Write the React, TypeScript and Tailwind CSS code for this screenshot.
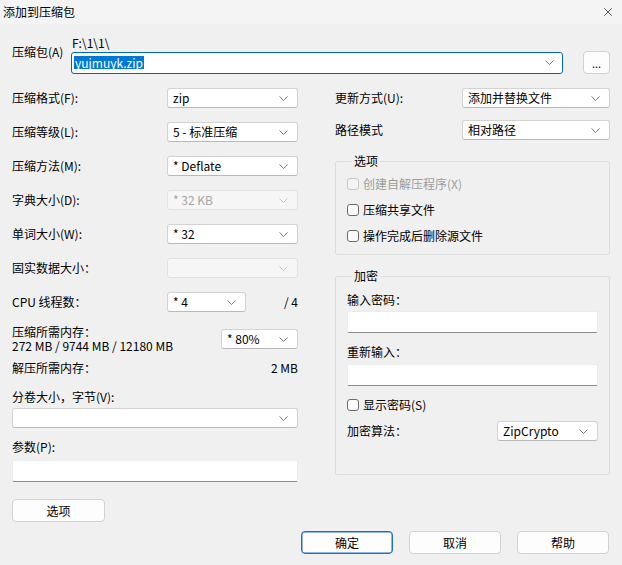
import type { ReactNode } from "react";
import { X } from "lucide-react";
import clsx from "clsx";

const Chevron = ({ light }: { light?: boolean }) => (
  <svg width="9" height="5" viewBox="0 0 9 5" className="shrink-0">
    <path d="M0.5 0.5 L4.5 4.5 L8.5 0.5" fill="none" stroke={light ? "#c4c4c4" : "#7a7a7a"} strokeWidth="1" />
  </svg>
);

const Combo = ({ value, className, disabled }: { value?: string; className: string; disabled?: boolean }) => (
  <div
    className={clsx(
      "flex h-[20px] shrink-0 items-center justify-between rounded-[3px] border pl-[5px] pr-[9px] leading-[16px]",
      disabled
        ? "border-[#e2e2e2] bg-[#f6f6f6] text-[#a6a6a6]"
        : "border-[#d3d3d3] border-b-[#b9b9b9] bg-white text-black",
      className
    )}
  >
    <span className="whitespace-nowrap">{value}</span>
    <Chevron light={disabled} />
  </div>
);

const Field = () => (
  <div className="h-[22px] w-full rounded-[2px] border border-[#ececec] border-b-[#8d8d8d] bg-white" />
);

const Button = ({ children, primary, className }: { children: ReactNode; primary?: boolean; className?: string }) => (
  <button
    className={clsx(
      "flex h-[23px] items-center justify-center rounded-[4px] border bg-[#fdfdfd]",
      primary ? "border-[#1f6fc0] shadow-[inset_0_0_0_0.5px_#1f6fc0]" : "border-[#d2d2d2]",
      className
    )}
  >
    {children}
  </button>
);

const Check = ({ label, disabled }: { label: string; disabled?: boolean }) => (
  <div className={clsx("flex h-[16px] items-center gap-[4px]", disabled ? "text-[#9d9d9d]" : "text-black")}>
    <span
      className={clsx(
        "h-[12px] w-[12px] shrink-0 rounded-[3px] border",
        disabled ? "border-[#c8c8c8] bg-[#f4f4f4]" : "border-[#6c6c6c] bg-[#fbfbfb]"
      )}
    />
    <span>{label}</span>
  </div>
);

const Row = ({ label, children }: { label: string; children: ReactNode }) => (
  <div className="flex h-[20px] items-center justify-between">
    <span>{label}</span>
    {children}
  </div>
);

const Group = ({ title, className, children }: { title: string; className?: string; children: ReactNode }) => (
  <fieldset className={clsx("rounded-[2px] border border-[#dcdcdc] px-[11px]", className)}>
    <legend className="ml-[5px] px-[2px] leading-[14px]">{title}</legend>
    {children}
  </fieldset>
);

export default function App() {
  return (
    <div className="flex h-[565px] w-[622px] flex-col overflow-hidden bg-[#f0f0f0] font-['Noto_Sans_CJK_SC','Noto_Sans',sans-serif] text-[12px] leading-[14px] text-black">
      <header className="flex h-[24px] shrink-0 items-center justify-between bg-[#f4f4f4] pl-[3px] pr-[7px]">
        <span className="leading-[14px]">添加到压缩包</span>
        <X size={14} strokeWidth={1.1} />
      </header>

      <div className="flex flex-col px-[12px]">
        {/* 压缩包 */}
        <div className="mt-[12px] flex">
          <span className="w-[59px] shrink-0 pt-[9px]">压缩包(A)</span>
          <div className="flex flex-1 flex-col">
            <span className="h-[14px] pl-[1px]">F:\1\1\</span>
            <div className="mt-[1px] flex items-center">
              <div className="flex h-[22px] w-[492px] items-center justify-between rounded-[3px] border border-[#0067c0] bg-white pl-[2px] pr-[8px]">
                <span className="bg-[#0078d7] px-[1px] leading-[13px] text-white">yujmuyk.zip</span>
                <Chevron />
              </div>
              <Button className="ml-[20px] w-[27px] text-[11px]">...</Button>
            </div>
          </div>
        </div>

        <div className="mt-[14px] flex items-start gap-[37px]">
          {/* left column */}
          <div className="flex w-[286px] shrink-0 flex-col">
            <div className="flex flex-col gap-[14px]">
              <Row label="压缩格式(F):">
                <Combo value="zip" className="w-[131px]" />
              </Row>
              <Row label="压缩等级(L):">
                <Combo value="5 - 标准压缩" className="w-[131px]" />
              </Row>
              <Row label="压缩方法(M):">
                <Combo value="* Deflate" className="w-[131px]" />
              </Row>
              <Row label="字典大小(D):">
                <Combo value="* 32 KB" className="w-[131px]" disabled />
              </Row>
              <Row label="单词大小(W):">
                <Combo value="* 32" className="w-[131px]" />
              </Row>
              <Row label="固实数据大小：">
                <Combo className="w-[131px]" disabled />
              </Row>
              <div className="flex h-[20px] items-center">
                <span className="w-[155px] shrink-0">CPU 线程数：</span>
                <Combo value="* 4" className="w-[79px]" />
                <span className="flex-1 text-right">/ 4</span>
              </div>
            </div>

            <div className="mt-[13px] flex items-center justify-between">
              <div className="flex flex-col leading-[14px]">
                <span>压缩所需内存：</span>
                <span>272 MB / 9744 MB / 12180 MB</span>
              </div>
              <Combo value="* 80%" className="w-[77px]" />
            </div>

            <div className="mt-[8px] flex justify-between">
              <span>解压所需内存：</span>
              <span>2 MB</span>
            </div>

            <span className="mt-[15px]">分卷大小，字节(V):</span>
            <Combo className="mt-[4px] w-full" />

            <span className="mt-[12px]">参数(P):</span>
            <div className="mt-[6px]">
              <Field />
            </div>

            <Button className="mt-[17px] w-[93px]">选项</Button>
          </div>

          {/* right column */}
          <div className="flex w-[275px] shrink-0 flex-col">
            <div className="flex h-[20px] items-center justify-between">
              <span>更新方式(U):</span>
              <Combo value="添加并替换文件" className="w-[148px]" />
            </div>
            <div className="mt-[12px] flex h-[20px] items-center justify-between">
              <span>路径模式</span>
              <Combo value="相对路径" className="w-[148px]" />
            </div>

            <Group title="选项" className="mt-[14px] pb-[10px] pt-[8px]">
              <div className="flex flex-col gap-[10px]">
                <Check label="创建自解压程序(X)" disabled />
                <Check label="压缩共享文件" />
                <Check label="操作完成后删除源文件" />
              </div>
            </Group>

            <Group title="加密" className="mt-[14px] pb-[33px] pt-[10px]">
              <div className="flex flex-col">
                <span>输入密码：</span>
                <div className="mt-[4px]">
                  <Field />
                </div>
                <span className="mt-[12px]">重新输入：</span>
                <div className="mt-[5px]">
                  <Field />
                </div>
                <div className="mt-[11px]">
                  <Check label="显示密码(S)" />
                </div>
                <div className="mt-[8px] flex h-[20px] items-center justify-between">
                  <span>加密算法：</span>
                  <Combo value="ZipCrypto" className="w-[101px]" />
                </div>
              </div>
            </Group>
          </div>
        </div>

        <div className="mt-[9px] flex justify-end gap-[16px] pr-[1px]">
          <Button primary className="w-[92px]">确定</Button>
          <Button className="w-[92px]">取消</Button>
          <Button className="w-[92px]">帮助</Button>
        </div>
      </div>
    </div>
  );
}
